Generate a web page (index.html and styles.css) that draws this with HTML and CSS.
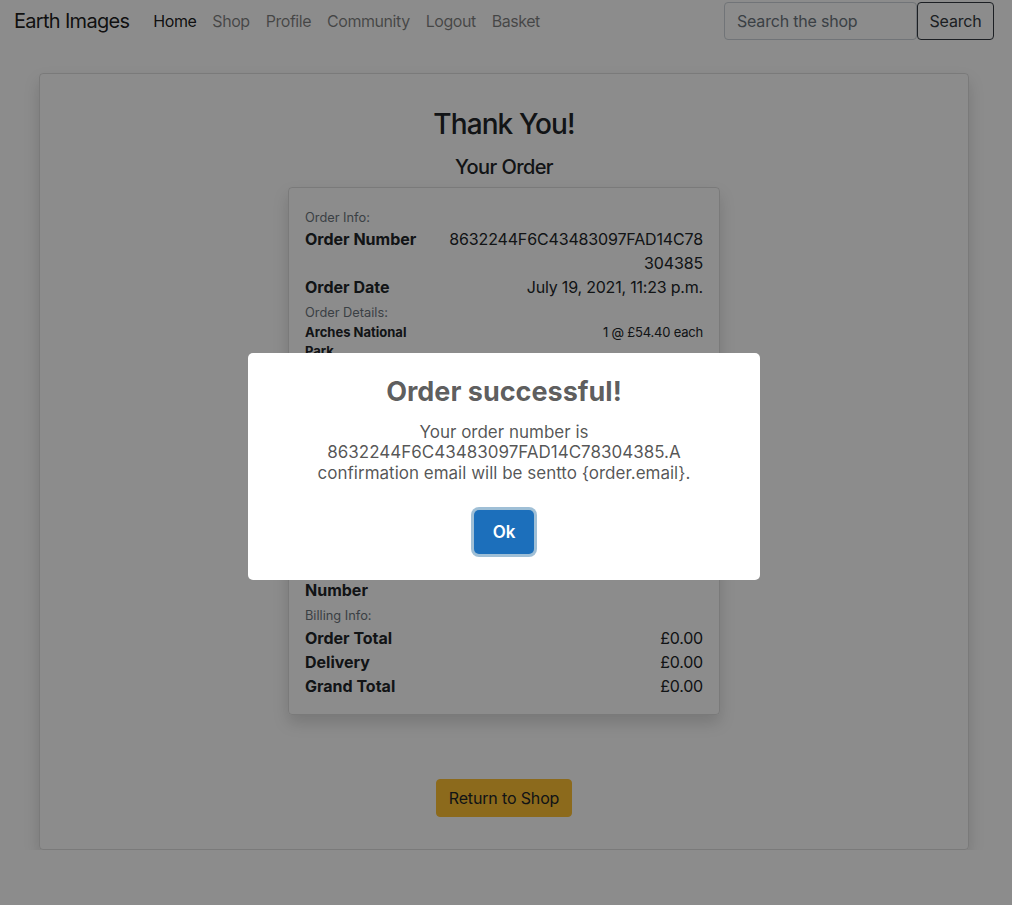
FILE: index.html
```html
<!DOCTYPE html>
<html lang="en">
<head>
<meta charset="utf-8">
<title>Earth Images - Order</title>
<link rel="stylesheet" href="styles.css">
</head>
<body>
<nav class="navbar">
  <a class="brand" href="#">Earth Images</a>
  <ul class="nav">
    <li><a class="nav-link active" href="#">Home</a></li>
    <li><a class="nav-link" href="#">Shop</a></li>
    <li><a class="nav-link" href="#">Profile</a></li>
    <li><a class="nav-link" href="#">Community</a></li>
    <li><a class="nav-link" href="#">Logout</a></li>
    <li><a class="nav-link" href="#">Basket</a></li>
  </ul>
  <form class="search">
    <input class="search-input" type="text" placeholder="Search the shop">
    <button class="search-btn" type="button">Search</button>
  </form>
</nav>

<main class="container">
  <div class="card">
    <h3 class="title">Thank You!</h3>
    <h5 class="subtitle">Your Order</h5>
    <div class="order-card">
      <p class="label">Order Info:</p>
      <div class="row"><span class="key">Order Number</span><span class="val break">8632244F6C43483097FAD14C78304385</span></div>
      <div class="row"><span class="key">Order Date</span><span class="val">July 19, 2021, 11:23 p.m.</span></div>
      <p class="label">Order Details:</p>
      <div class="row small-row"><span class="key">Arches National Park</span><span class="val">1 @ £54.40 each</span></div>
      <p class="label label-gap">Delivering To:</p>
      <div class="row"><span class="key">Full Name</span><span class="val">Jane Doe</span></div>
      <div class="row"><span class="key">Address 1</span><span class="val">1 Main Street</span></div>
      <div class="row"><span class="key">Address 2</span><span class="val">Flat 2</span></div>
      <div class="row"><span class="key">Town</span><span class="val">London</span></div>
      <div class="row"><span class="key">County</span><span class="val">Greater London</span></div>
      <div class="row"><span class="key">Postcode</span><span class="val">N1 1AA</span></div>
      <div class="row"><span class="key">Country</span><span class="val">GB</span></div>
      <div class="row"><span class="key">Phone<br>Number</span><span class="val">0123456789</span></div>
      <p class="label">Billing Info:</p>
      <div class="row"><span class="key">Order Total</span><span class="val">£0.00</span></div>
      <div class="row"><span class="key">Delivery</span><span class="val">£0.00</span></div>
      <div class="row"><span class="key">Grand Total</span><span class="val">£0.00</span></div>
    </div>
    <div class="actions">
      <a class="btn-warning" href="#">Return to Shop</a>
    </div>
  </div>
</main>

<div class="overlay">
  <div class="modal">
    <div class="modal-title">Order successful!</div>
    <div class="modal-text">Your order number is 8632244F6C43483097FAD14C78304385.A confirmation email will be sentto {order.email}.</div>
    <div class="modal-footer">
      <button class="modal-btn" type="button">Ok</button>
    </div>
  </div>
</div>
</body>
</html>
```

FILE: styles.css
```css
* { box-sizing: border-box; }

html, body {
  background: #fff;
}

body {
  margin: 0 4px 0 0;
  font-family: Inter, "Noto Sans", "Liberation Sans", sans-serif;
  font-size: 16px;
  line-height: 1.5;
  color: #212529;
}

a { text-decoration: none; }

/* navbar */
.navbar {
  display: flex;
  align-items: center;
  height: 42px;
  padding: 2px 14px;
}

.brand {
  font-size: 20px;
  line-height: 30px;
  letter-spacing: -0.7px;
  color: rgba(0, 0, 0, 0.9);
  margin-right: 16px;
}

.nav {
  display: flex;
  list-style: none;
  margin: 0;
  padding: 0;
  flex: 1;
}

.nav-link {
  display: block;
  padding: 8px;
  letter-spacing: -0.45px;
  color: rgba(0, 0, 0, 0.5);
}

.nav-link.active { color: rgba(0, 0, 0, 0.9); }

.search {
  display: flex;
  margin: 0;
}

.search-input {
  width: 193px;
  height: 38px;
  padding: 6px 12px;
  font: inherit;
  letter-spacing: -0.2px;
  color: #495057;
  border: 1px solid #ced4da;
  border-radius: 4px;
  background: #fff;
}

.search-input::placeholder { color: #6c757d; }

.search-btn {
  width: 77px;
  height: 38px;
  font: inherit;
  letter-spacing: -0.2px;
  color: #343a40;
  background: transparent;
  border: 1px solid #343a40;
  border-radius: 4px;
}

/* content */
.container {
  width: 930px;
  margin: 31px auto 0;
}

.card {
  border: 1px solid rgba(0, 0, 0, 0.125);
  border-radius: 4px;
  box-shadow: 0 8px 16px rgba(0, 0, 0, 0.15);
  padding: 34px 20px 32px;
  display: flex;
  flex-direction: column;
  align-items: center;
}

.title {
  margin: 0 0 13px;
  font-size: 28px;
  font-weight: 500;
  line-height: 1.2;
  letter-spacing: -0.9px;
}

.subtitle {
  margin: 0 0 8px;
  font-size: 20px;
  font-weight: 500;
  line-height: 1.2;
  letter-spacing: -0.6px;
}

.order-card {
  width: 432px;
  border: 1px solid rgba(0, 0, 0, 0.125);
  border-radius: 4px;
  box-shadow: 0 8px 16px rgba(0, 0, 0, 0.15);
  padding: 16px;
}

.label {
  margin: 4px 0 0;
  font-size: 12.8px;
  line-height: 19.5px;
  color: #6c757d;
}

.label-gap { margin-top: 5px; }

.row {
  display: grid;
  grid-template-columns: calc((100% + 30px) / 3 - 30px) 1fr;
  column-gap: 30px;
}

.key { font-weight: 700; }

.val {
  text-align: right;
  letter-spacing: -0.2px;
}

.break {
  word-break: break-all;
  letter-spacing: -0.15px;
}

.small-row {
  font-size: 13px;
  line-height: 19.5px;
}

.actions {
  margin-top: 64px;
}

.btn-warning {
  display: inline-block;
  padding: 6px 12px;
  font-size: 16px;
  line-height: 24px;
  letter-spacing: -0.15px;
  color: #212529;
  background: #ffc133;
  border: 1px solid #ffc133;
  border-radius: 4px;
}

/* overlay + modal */
.overlay {
  position: fixed;
  inset: 0;
  background: rgba(0, 0, 0, 0.45);
  display: flex;
  justify-content: center;
  align-items: center;
  padding: 28px 4px 0 0;
}

.modal {
  width: 512px;
  background: #fff;
  border-radius: 5px;
  padding: 23px 46px 26px;
  text-align: center;
}

.modal-title {
  font-size: 27px;
  font-weight: 700;
  line-height: 32px;
  color: rgba(0, 0, 0, 0.65);
}

.modal-text {
  margin-top: 14px;
  font-size: 17px;
  line-height: 20.5px;
  color: rgba(0, 0, 0, 0.68);
}

.modal-footer {
  margin-top: 27px;
}

.modal-btn {
  font-family: inherit;
  font-size: 17px;
  font-weight: 600;
  line-height: 22px;
  padding: 11px 19px;
  color: #fff;
  background: #1c6fbb;
  border: none;
  border-radius: 5px;
  box-shadow: 0 0 0 3px rgba(43, 114, 165, 0.45);
}
```
